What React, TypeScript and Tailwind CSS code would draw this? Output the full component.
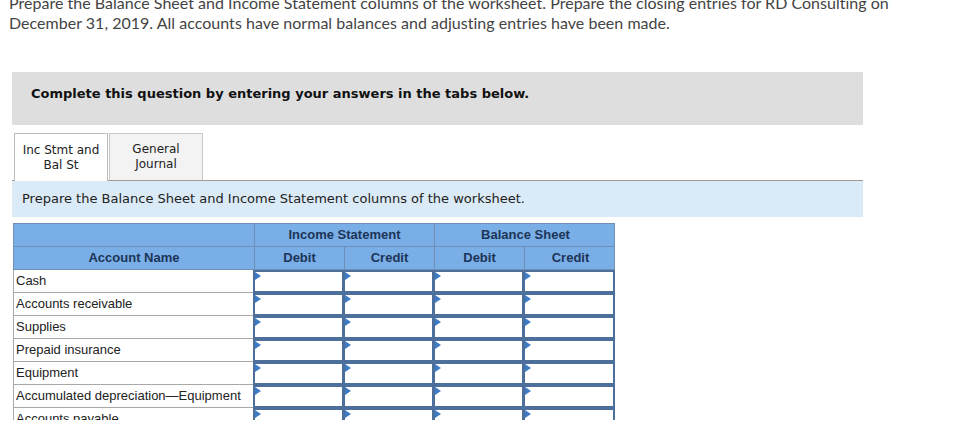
import React from "react";

const rows = [
  "Cash",
  "Accounts receivable",
  "Supplies",
  "Prepaid insurance",
  "Equipment",
  "Accumulated depreciation\u2014Equipment",
  "Accounts payable",
];

function InputCell() {
  return (
    <div className="relative h-[23px] border-2 border-[#4d6f9c] bg-white -ml-[1px] first:ml-0">
      <svg className="absolute left-[0px] top-[0px]" width="6" height="8" viewBox="0 0 6 8">
        <path d="M0 0 L6 4 L0 8 Z" fill="#3d7bc4" />
      </svg>
    </div>
  );
}

export default function App() {
  return (
    <div className="w-[964px] h-[427px] overflow-hidden bg-white">
      <div
        className="pl-[9px] -mt-[7px] text-[16px] leading-[20px] text-[#444] tracking-[0.02px]"
        style={{ fontFamily: "Lato, 'Open Sans', sans-serif" }}
      >
        <div>Prepare the Balance Sheet and Income Statement columns of the worksheet. Prepare the closing entries for RD Consulting on</div>
        <div>December 31, 2019. All accounts have normal balances and adjusting entries have been made.</div>
      </div>

      <div className="ml-[12px] mt-[39px] w-[851px] h-[53px] bg-[#dedede] pl-[19px] pt-[14px]">
        <div
          className="text-[13px] leading-[16px] font-bold text-[#111]"
          style={{ fontFamily: "'DejaVu Sans', Verdana, sans-serif" }}
        >
          Complete this question by entering your answers in the tabs below.
        </div>
      </div>

      <div
        className="ml-[12px] mt-[8px] w-[851px] flex items-end"
        style={{ fontFamily: "'DejaVu Sans', Verdana, sans-serif" }}
      >
        <div className="w-[2px] h-[1px] bg-[#9a9a9a]" />
        <div className="w-[94px] h-[48px] border border-b-0 border-[#bdbdbd] bg-white flex flex-col items-center justify-center text-[12px] leading-[15px] text-[#222]">
          <span>Inc Stmt and</span>
          <span>Bal St</span>
        </div>
        <div className="w-[1px] h-[1px] bg-[#9a9a9a]" />
        <div className="w-[94px] h-[48px] border border-[#c8c8c8] border-b-[#9a9a9a] bg-[#f3f3f3] flex flex-col items-center justify-center text-[12px] leading-[15px] text-[#222]">
          <span>General</span>
          <span>Journal</span>
        </div>
        <div className="flex-1 h-[1px] bg-[#9a9a9a]" />
      </div>

      <div
        className="ml-[12px] w-[851px] h-[36px] bg-[#dbeaf7] flex items-center pl-[10px] text-[13px] text-[#222]"
        style={{ fontFamily: "'DejaVu Sans', Verdana, sans-serif" }}
      >
        Prepare the Balance Sheet and Income Statement columns of the worksheet.
      </div>

      <div
        className="ml-[13px] mt-[6px] w-[602px] h-[197px] overflow-hidden text-[13px]"
        style={{ fontFamily: "'Liberation Sans', Arial, sans-serif" }}
      >
        <div className="grid grid-cols-[241px_180px_181px] bg-[#7aaee6] border border-[#6f8fb7] h-[24px] font-bold text-[#1c3558]">
          <div className="border-r border-[#6f8fb7]" />
          <div className="border-r border-[#6f8fb7] flex items-center justify-center">Income Statement</div>
          <div className="flex items-center justify-center">Balance Sheet</div>
        </div>
        <div className="grid grid-cols-[241px_90px_90px_90px_91px] bg-[#7aaee6] border border-t-0 border-[#6f8fb7] h-[23px] font-bold text-[#1c3558]">
          <div className="border-r border-[#6f8fb7] flex items-center justify-center">Account Name</div>
          <div className="border-r border-[#6f8fb7] flex items-center justify-center">Debit</div>
          <div className="border-r border-[#6f8fb7] flex items-center justify-center">Credit</div>
          <div className="border-r border-[#6f8fb7] flex items-center justify-center">Debit</div>
          <div className="flex items-center justify-center">Credit</div>
        </div>
        {rows.map((r) => (
          <div key={r} className="grid grid-cols-[241px_90px_90px_90px_91px] h-[23px]">
            <div className="border border-t-0 border-[#a8a8a8] flex items-center pl-[2px] text-[#222] whitespace-nowrap">
              {r}
            </div>
            <InputCell />
            <InputCell />
            <InputCell />
            <InputCell />
          </div>
        ))}
      </div>
    </div>
  );
}
